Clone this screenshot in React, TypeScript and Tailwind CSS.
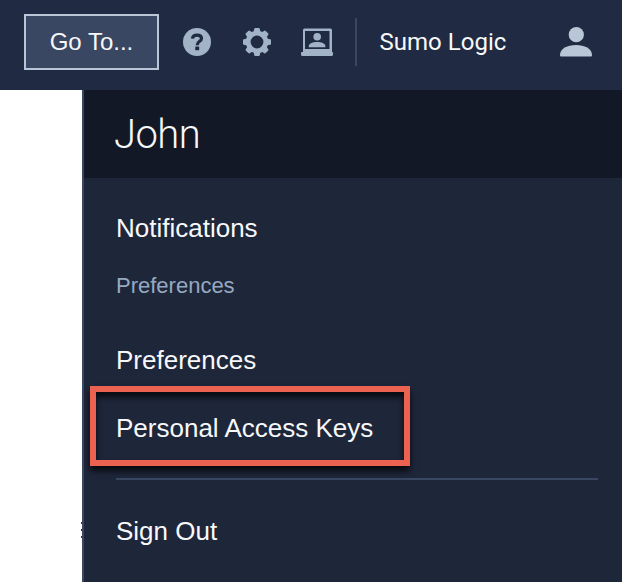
import React from "react";

function HelpIcon() {
  return (
    <svg className="ml-6 size-7 shrink-0" viewBox="0 0 28 28" fill="none">
      <circle cx="14" cy="14" r="14" fill="#a2b3c7" />
      <path d="M9.4 10.6C9.7 8.2 11.4 7.2 14 7.2C16.9 7.2 18.5 8.4 18.5 10.5C18.5 13.5 14.2 13.2 14.2 17.2" stroke="#202b43" strokeWidth="3.2" />
      <rect x="12.2" y="18.4" width="4" height="3.8" rx="0.6" fill="#202b43" />
    </svg>
  );
}

function GearIcon() {
  return (
    <svg className="ml-8 size-7 shrink-0" viewBox="0 0 28 28" fill="none">
      <circle cx="14" cy="14" r="8.8" stroke="#a2b3c7" strokeWidth="4.8" />
      <g fill="#a2b3c7">
        {[0, 45, 90, 135, 180, 225, 270, 315].map((angle) => (
          <path key={angle} d="M10.4 5L11.2 0.9Q11.4 0 12.3 0H15.7Q16.6 0 16.8 0.9L17.6 5Z" transform={`rotate(${angle} 14 14)`} />
        ))}
      </g>
    </svg>
  );
}

function PresenterIcon() {
  return (
    <svg className="ml-[30px] h-7 w-8 shrink-0" viewBox="0 0 32 28" fill="#a2b3c7">
      <path fillRule="evenodd" d="M3.5 0.5H29.5Q31 0.5 31 2V24H31.2Q32 24 32 24.8V26.5Q32 28 30.5 28H1.5Q0 28 0 26.5V24.8Q0 24 0.8 24H2V2Q2 0.5 3.5 0.5ZM4 3V21H28.5V3Z" />
      <circle cx="16.2" cy="8.7" r="3.8" />
      <path d="M7.8 19.2V18.2C7.8 12.6 24.4 12.6 24.4 18.2V19.2Z" />
    </svg>
  );
}

function UserIcon() {
  return (
    <svg className="ml-auto mr-[30px] h-[30px] w-8 shrink-0" viewBox="0 0 32 30" fill="#b9c6d8">
      <circle cx="16.3" cy="7.7" r="7.6" />
      <path d="M0 28C0 21.5 7.5 18 16 18S32 21.5 32 28Q32 29.6 31 29.6H1Q0 29.6 0 28Z" />
    </svg>
  );
}

const item = "block w-fit whitespace-nowrap text-[26px] leading-[30px] text-[#f7f8fa]";

export default function App() {
  return (
    <div className="flex h-[582px] w-[622px] flex-col overflow-hidden bg-white font-['Liberation_Sans',Arial,sans-serif]">
      <header className="flex h-[90px] shrink-0 items-center bg-[#202b43] pb-1.5 pl-6">
        <button className="h-14 w-[135px] shrink-0 whitespace-nowrap border-2 border-[#b9c6d8] bg-[#3a4763] text-2xl leading-7 text-[#f7f8fa]">Go To...</button>
        <HelpIcon />
        <GearIcon />
        <PresenterIcon />
        <div className="ml-[22px] h-12 w-0.5 shrink-0 bg-[#3a4763]" />
        <span className="ml-[22.5px] whitespace-nowrap font-['Roboto',sans-serif] text-2xl leading-7 tracking-[0.02px] text-[#f7f8fa]">Sumo Logic</span>
        <UserIcon />
      </header>
      <div className="flex flex-1">
        <div className="flex w-[82px] flex-col items-end gap-[5px] pt-[432px]">
          <i className="h-0.5 w-px bg-[#34373d]" />
          <i className="h-0.5 w-px bg-[#34373d]" />
          <i className="h-0.5 w-px bg-[#34373d]" />
        </div>
        <main className="relative flex-1 border-l-2 border-[#3a4763] bg-[#1e263a]">
          <div className="flex h-[88px] items-center bg-[#121825] pl-[30px] pt-[2px]">
            <h1 className="font-['Roboto',sans-serif] text-[40px] font-light leading-[48px] tracking-[-0.6px] text-[#f7f8fa]">John</h1>
          </div>
          <nav className="flex flex-col pl-8 pt-[35px]">
            <a className={item}>Notifications</a>
            <span className="mt-[30px] w-fit text-[22px] leading-[26px] text-[#96a9c1]">Preferences</span>
            <a className={item + " mt-[46px]"}>Preferences</a>
            <a className={item + " mt-[38px]"}>Personal Access Keys</a>
            <div className="mr-6 mt-[35px] h-0.5 bg-[#3a4763]" />
            <a className={item + " mt-[36px]"}>Sign Out</a>
          </nav>
          <div className="absolute left-1.5 top-[296px] h-20 w-80 border-[6px] border-[#eb6251] shadow-[0_5px_6px_rgba(0,0,0,0.75),inset_0_5px_6px_rgba(0,0,0,0.75)]" />
        </main>
      </div>
    </div>
  );
}
